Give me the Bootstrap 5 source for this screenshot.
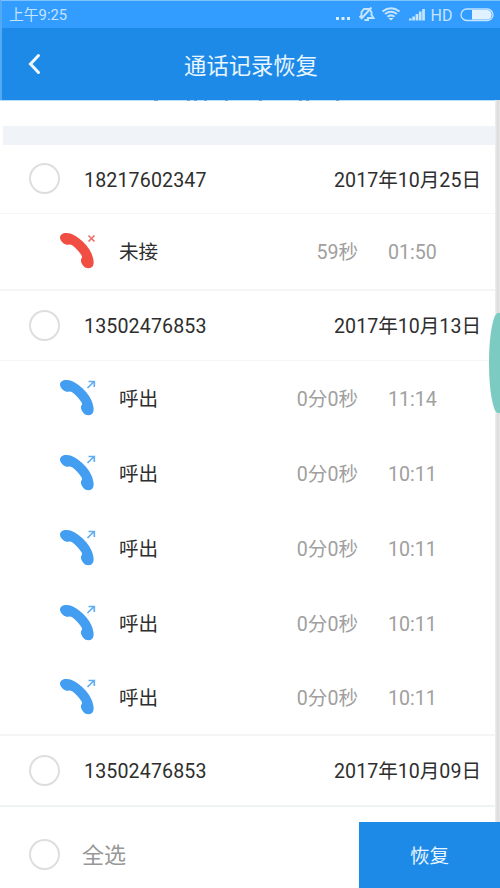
<!DOCTYPE html>
<html lang="zh-CN">
<head>
<meta charset="utf-8">
<meta name="viewport" content="width=device-width, initial-scale=1">
<title>通话记录恢复</title>
<link href="https://cdn.jsdelivr.net/npm/bootstrap@5.3.0/dist/css/bootstrap.min.css" rel="stylesheet">
<style>
body{font-family:Roboto,"Noto Sans CJK SC",sans-serif;font-size:19.6px;line-height:1.2;color:#2e2e2e;background:#fff;overflow:hidden}
.screen{width:500px;height:888px}
.statusbar{height:28px;background:#339cff;color:#c5e5ff;font-size:14.8px;border-top:1px solid #7cc3ff;padding:1px 5px 0 7px}
.clock{padding-top:2px}
.titlebar{height:72px;background:#1e8ae8;color:#e9f6ff;font-size:22.3px;display:grid;grid-template-columns:70px 1fr 70px}
.titlebar span{padding-top:4px}
.top-edge{border-left:2px solid #52a9f4}
.intro{height:26px}
.band{height:19px;background:#f0f4f8;margin-left:3px}
.group-row{height:70px;padding:0 19px 0 29px;border-bottom:1px solid #f4f5f5}
.group-row .label,.call-row .label{padding-top:3px}
.number{letter-spacing:.14px}
.first-group{height:69px}
.last-group{height:71px;border-bottom:2px solid #f0f3f4}
.call-row{height:75px;padding:0 63px 0 58px}
.call-end{border-bottom:2px solid #f4f6f6}
.final-call{height:76px}
.missed{height:77px}
.pick{width:31px;height:31px;border:2px solid #dedede;margin-right:24px;flex:none}
.muted{color:#a0a0a0}
.time{width:49px;margin-left:30px}
.footer-bar{height:81px}
.all{font-size:22px;color:#979797;padding:13px 0 0 29px}
.all .pick{margin-right:22px}
.all .label{padding-top:5px}
.restore{width:141px;height:66px;background:#1e8ae8;color:#e9f6ff;font-size:19.5px}
.edge{right:0;top:100px;width:5px;height:722px;background:linear-gradient(90deg,#f0f0f0,#dcdcdc 50%,#e5e5e5)}
.handle{right:0;top:313px;width:11px;height:100px;background:#7bcbc2;border-radius:9px 0 0 9px/50px 0 0 50px}
</style>
<script src="https://cdn.jsdelivr.net/npm/bootstrap@5.3.0/dist/js/bootstrap.bundle.min.js"></script>
</head>
<body>
<svg class="d-none" xmlns="http://www.w3.org/2000/svg">
<symbol id="phone" viewBox="0 0 40 40"><path fill="currentColor" d="M2 6.500C2 3.500 5 1.700 9 2C14 2.200 17 4.500 20.500 7C26.500 11.500 31 16.500 33.500 22.500C36 29 36.500 33.500 34 36C31.500 38 27.500 37.500 25.500 35C23.500 32.500 22 29.500 23.500 27.500C24.500 26.300 24 25 23 23.500C20.500 20 18 17 14.500 14.500C13 13.500 12 13.300 10.500 13.700C7.500 14.200 2.400 11.500 2 6.500Z"/></symbol>
</svg>
<main class="screen position-relative d-flex flex-column overflow-hidden">
  <div class="statusbar top-edge d-flex align-items-center justify-content-between">
    <span class="clock">上午9:25</span>
    <svg width="162" height="24" viewBox="333 3 162 24" fill="none" stroke="#c5e5ff" stroke-width="1.300">
      <g fill="#d9efff" stroke="none"><rect x="336" y="17" width="3" height="3"/><rect x="341.500" y="17" width="3" height="3"/><rect x="347" y="17" width="3" height="3"/></g>
      <path stroke-width="1.900" d="M361.500 16V12L364 9H369L371.500 12V15L373.500 18H367M359.500 17.500L361.500 15.500M364.500 20H369M371.500 7.500L361 19"/>
      <path d="M382.500 11.500Q391 5 399.500 11.500M385 14Q391 9.500 397 14M387.500 16.700Q391 14 394.500 16.700" stroke-width="2"/>
      <path d="M388.500 18L391 20.500L393.500 18Z" fill="#d9efff" stroke="none"/>
      <path fill="#c5e5ff" stroke="none" d="M409 18.500h2.700V20.500h-2.700zM412.300 16.500h2.700v4h-2.700zM415.600 14h2.700v6.500h-2.700zM418.900 11.500h2.700v9h-2.700zM422.200 9h2.700v11.500h-2.700z"/>
      <text x="430.500" y="20.500" font-size="16" fill="#c5e5ff" stroke="none">HD</text>
      <rect x="461" y="9" width="32" height="11.500" rx="5.750"/>
      <path fill="#e0f1ff" stroke="none" d="M472 10H487.500A4.800 4.800 0 0 1 487.500 19.500H472Z"/>
    </svg>
  </div>
  <header class="titlebar top-edge align-items-center text-center">
    <svg width="20" height="26" viewBox="0 0 20 26" class="ms-4" fill="none" stroke="#f1f9ff" stroke-width="3" stroke-linecap="round"><path d="M12.500 4.500L4.500 13L12.500 21.500"/></svg>
    <span>通话记录恢复</span>
  </header>
  <div class="intro">
    <svg class="d-block" width="500" height="2"><path d="M0 .5H500" stroke="#b5dcfa"/><path stroke="#6aa5d5" d="M154 .5h4M187 .5h3M194 .5h3M204 .5h3M225 .5h3M259 .5h3M299 .5h3M306 .5h3M336 .5h3"/></svg>
  </div>
  <div class="band"></div>

  <div class="group-row first-group d-flex align-items-center"><span class="pick rounded-circle"></span><span class="label number">18217602347</span><span class="label ms-auto">2017年10月25日</span></div>
  <div class="call-row call-end missed d-flex align-items-center">
    <svg width="61" height="40" viewBox="0 0 61 40" color="#f04e43"><use href="#phone" width="40" height="40"/><path d="M30.500 4.500L36.500 10.500M36.500 4.500L30.500 10.500" fill="none" stroke="#ea6d69" stroke-width="1.600"/></svg>
    <span class="label">未接</span><span class="label muted ms-auto">59秒</span><span class="label muted time">01:50</span>
  </div>

  <div class="group-row d-flex align-items-center"><span class="pick rounded-circle"></span><span class="label number">13502476853</span><span class="label ms-auto">2017年10月13日</span></div>
  <div class="call-row d-flex align-items-center">
    <svg width="61" height="40" viewBox="0 0 61 40" color="#439df0"><use href="#phone" width="40" height="40"/><path id="out" d="M29.500 10L36 3.500M30.500 3.500H36.300V9" fill="none" stroke="#62aef1" stroke-width="1.700"/></svg>
    <span class="label">呼出</span><span class="label muted ms-auto">0分0秒</span><span class="label muted time">11:14</span>
  </div>
  <div class="call-row d-flex align-items-center">
    <svg width="61" height="40" viewBox="0 0 61 40" color="#439df0"><use href="#phone" width="40" height="40"/><use href="#out"/></svg>
    <span class="label">呼出</span><span class="label muted ms-auto">0分0秒</span><span class="label muted time">10:11</span>
  </div>
  <div class="call-row d-flex align-items-center">
    <svg width="61" height="40" viewBox="0 0 61 40" color="#439df0"><use href="#phone" width="40" height="40"/><use href="#out"/></svg>
    <span class="label">呼出</span><span class="label muted ms-auto">0分0秒</span><span class="label muted time">10:11</span>
  </div>
  <div class="call-row d-flex align-items-center">
    <svg width="61" height="40" viewBox="0 0 61 40" color="#439df0"><use href="#phone" width="40" height="40"/><use href="#out"/></svg>
    <span class="label">呼出</span><span class="label muted ms-auto">0分0秒</span><span class="label muted time">10:11</span>
  </div>
  <div class="call-row call-end final-call d-flex align-items-center">
    <svg width="61" height="40" viewBox="0 0 61 40" color="#439df0"><use href="#phone" width="40" height="40"/><use href="#out"/></svg>
    <span class="label">呼出</span><span class="label muted ms-auto">0分0秒</span><span class="label muted time">10:11</span>
  </div>

  <div class="group-row last-group d-flex align-items-center"><span class="pick rounded-circle"></span><span class="label number">13502476853</span><span class="label ms-auto">2017年10月09日</span></div>
  <footer class="footer-bar d-flex align-items-end justify-content-between">
    <label class="all d-flex align-items-center align-self-stretch"><span class="pick rounded-circle"></span><span class="label">全选</span></label>
    <button type="button" class="restore btn rounded-0 border-0 p-0 pt-1">恢复</button>
  </footer>
  <div class="edge position-absolute"></div>
  <div class="handle position-absolute"></div>
</main>
</body>
</html>
